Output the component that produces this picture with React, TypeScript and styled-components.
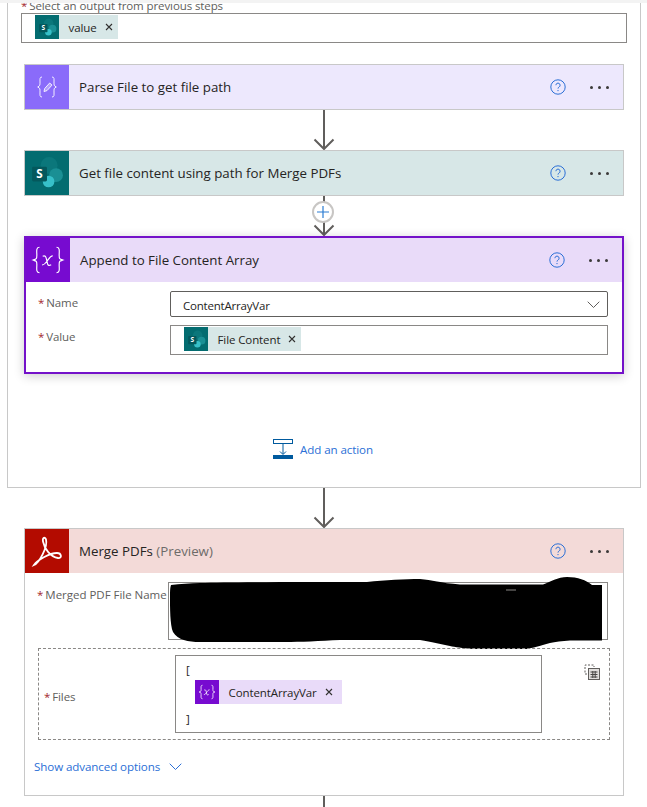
import React from "react";
import styled, { createGlobalStyle } from "styled-components";

type Tone = "parse" | "share" | "variable" | "pdf";

const tones: Record<Tone, { head: string; icon: string }> = {
  parse: { head: "#ede8fd", icon: "#8a6bfa" },
  share: { head: "#d7e7e7", icon: "#036c70" },
  variable: { head: "#e9dbf9", icon: "#770bd0" },
  pdf: { head: "#f3dad8", icon: "#b30b00" },
};

const Global = createGlobalStyle`
  html, body { margin: 0; padding: 0; background: #fff; overflow: hidden; }
  * { box-sizing: border-box; }
  body { font-family: "Open Sans", "Noto Sans", sans-serif; color: #252423; }
`;

const Page = styled.div`
  width: 647px;
  height: 807px;
  overflow: hidden;
`;

const TopBand = styled.div`
  height: 3px;
  background: #f3f3f3;
`;

const Scope = styled.section`
  margin: 0 6px 0 7px;
  padding: 0 13px;
  border: 1px solid #c8c8c8;
  border-top: 0;
  height: 485px;
`;

const ClippedLabel = styled.div`
  height: 10px;
  overflow: hidden;
  display: flex;
  align-items: flex-end;
  font-size: 11.5px;
  line-height: 14px;
  letter-spacing: -0.1px;
  color: #605e5c;
  white-space: nowrap;
`;

const Required = styled.span`
  color: #a4262c;
  margin-right: 2px;
`;

const OutputBox = styled.div`
  height: 30px;
  border: 1px solid #8a8886;
  padding: 1px 13px;
  margin-bottom: 21px;
  display: flex;
  align-items: flex-start;
`;

const Steps = styled.div`
  margin: 0 3px;
`;

const Card = styled.div<{ $selected?: boolean }>`
  position: relative;
  background: #fff;
  border: ${(p) => (p.$selected ? "2px solid #7412c9" : "1px solid #c8c8c8")};
  box-shadow: ${(p) => (p.$selected ? "0 2px 10px rgba(0,0,0,0.2)" : "none")};
`;

const Head = styled.header<{ $tone: Tone }>`
  height: 44px;
  display: flex;
  align-items: center;
  background: ${(p) => tones[p.$tone].head};
`;

const HeadIcon = styled.div<{ $tone: Tone }>`
  width: 44px;
  height: 44px;
  flex: none;
  display: flex;
  align-items: center;
  justify-content: center;
  background: ${(p) => tones[p.$tone].icon};
`;

const HeadTitle = styled.h3`
  margin: 0 0 0 10px;
  font-size: 13.3px;
  font-weight: 400;
  color: #252423;
  letter-spacing: 0;
`;

const Muted = styled.span`
  color: #6d6b69;
`;

const HeadActions = styled.div`
  margin-left: auto;
  display: flex;
  align-items: center;
  gap: 24px;
  padding-right: 14px;
`;

const Dots = styled.div`
  display: flex;
  gap: 5px;
  & > i {
    width: 3px;
    height: 3px;
    border-radius: 50%;
    background: #3b3a39;
  }
`;

const Connector = styled.div`
  position: relative;
  height: 40px;
  display: flex;
  justify-content: center;
`;

const PlusBadge = styled.div`
  position: absolute;
  left: 288px;
  top: 5px;
  width: 22px;
  height: 22px;
  border-radius: 50%;
  border: 2px solid #c8c6c4;
  background: #fff;
  display: flex;
  align-items: center;
  justify-content: center;
`;

const VarBody = styled.div`
  padding: 9px 14px 17px 12px;
  display: grid;
  grid-template-columns: 132px 1fr;
  row-gap: 8px;
`;

const FieldLabel = styled.label`
  font-size: 11.5px;
  letter-spacing: -0.1px;
  color: #605e5c;
  padding-top: 4px;
  white-space: nowrap;
`;

const Select = styled.div`
  height: 26px;
  border: 1px solid #605e5c;
  border-radius: 2px;
  padding: 2px 7px 0 12px;
  display: flex;
  align-items: center;
  justify-content: space-between;
  font-size: 11.5px;
  letter-spacing: -0.2px;
`;

const TokenBox = styled.div`
  height: 30px;
  border: 1px solid #8a8886;
  padding: 1px 13px;
  display: flex;
  align-items: flex-start;
`;

const Token = styled.div<{ $tone: Tone }>`
  height: 24px;
  display: flex;
  align-items: center;
  background: ${(p) => tones[p.$tone].head};
  padding-right: 5px;
  font-size: 11.5px;
  letter-spacing: -0.1px;
  color: #252423;
`;

const TokenIcon = styled.div<{ $tone: Tone }>`
  width: 24px;
  height: 24px;
  display: flex;
  align-items: center;
  justify-content: center;
  background: ${(p) => tones[p.$tone].icon};
  margin-right: 9.5px;
`;

const TokenClose = styled.span`
  display: flex;
  margin-left: 8px;
`;

const AddAction = styled.div`
  height: 113px;
  padding-top: 65px;
  padding-left: 249px;
  display: flex;
  align-items: flex-start;
  gap: 7px;
  font-size: 11.6px;
  letter-spacing: -0.1px;
  color: #2b6fd6;
  line-height: 21px;
`;

const Lower = styled.div`
  margin: 0 23px 0 24px;
`;

const PdfCard = styled(Card)`
  height: 268px;
`;

const PdfBody = styled.div`
  padding: 9px 13px 0;
`;

const NameRow = styled.div`
  position: relative;
  display: flex;
  margin-bottom: 8px;
`;

const NameLabel = styled(FieldLabel)`
  width: 131px;
  margin-left: -1px;
  padding-top: 5px;
  letter-spacing: -0.02px;
`;

const NameInput = styled.div`
  width: 440px;
  height: 58px;
  border: 1px solid #8a8886;
`;

const Scribble = styled.svg`
  position: absolute;
  left: 132px;
  top: -5px;
`;

const FilesBox = styled.div`
  position: relative;
  height: 92px;
  border: 1px dashed #8a8886;
  padding: 6px 0 0 136px;
  display: flex;
`;

const FilesLabel = styled(FieldLabel)`
  position: absolute;
  left: 5px;
  top: 36px;
`;

const ArrayEditor = styled.div`
  width: 367px;
  height: 78px;
  border: 1px solid #8a8886;
  padding: 6px 10px;
  font-size: 11.5px;
  line-height: 15px;
  color: #252423;
`;

const ArrayToken = styled(Token)`
  width: 147px;
  margin: 3px 0 7px 9px;
`;

const SwitchIcon = styled.svg`
  margin: 9px 0 0 42px;
`;

const Advanced = styled.div`
  margin: 19px 0 0 -4px;
  display: flex;
  align-items: center;
  gap: 9px;
  font-size: 11.6px;
  letter-spacing: -0.1px;
  color: #2b6fd6;
`;

const Tail = styled.div`
  height: 11px;
  display: flex;
  justify-content: center;
`;

const TailLine = styled.div`
  width: 2px;
  background: #605e5c;
`;

const Help = () => (
  <svg width="16" height="16" viewBox="0 0 16 16" fill="none">
    <circle cx="8" cy="8" r="7.2" stroke="#2b6fd6" strokeWidth="1" />
    <path d="M5.9 6.2a2.1 2.1 0 1 1 3.2 1.8c-.7.4-1.1.8-1.1 1.6" stroke="#2b6fd6" strokeWidth="1" />
    <circle cx="8" cy="11.6" r=".7" fill="#2b6fd6" />
  </svg>
);

const Actions = () => (
  <HeadActions>
    <Help />
    <Dots>
      <i />
      <i />
      <i />
    </Dots>
  </HeadActions>
);

const SharePoint = ({ size }: { size: number }) => (
  <svg width={size} height={size} viewBox="0 0 32 32">
    <circle cx="18" cy="9" r="8" fill="#0b777b" />
    <circle cx="24.500" cy="18" r="6.500" fill="#1a8f94" />
    <circle cx="17.500" cy="24" r="5.500" fill="#37c0c9" />
    <rect x="2" y="10" width="14" height="14" rx="1.400" fill="#04585c" />
    <text x="9" y="21" textAnchor="middle" fontSize="11" fontWeight="700" fill="#fff" fontFamily="Open Sans, sans-serif">
      S
    </text>
  </svg>
);

const ParseGlyph = () => (
  <svg width="24" height="24" viewBox="0 0 24 24" fill="none" stroke="#f3efff" strokeWidth="1">
    <path d="M7 2C4.500 2 5 4 5 7s.2 3.800-2.300 5C5.200 13.200 5 14 5 17s-.5 5 2 5" />
    <path d="M17 2c2.500 0 2 2 2 5s-.2 3.800 2.300 5C18.800 13.200 19 14 19 17s.5 5-2 5" />
    <path d="M9 16.500l.7-3 5-5.500 2.300 2.100-5 5.500z" fill="#fff" fillOpacity=".35" />
  </svg>
);

const VarGlyph = ({ size, weight }: { size: number; weight: number }) => (
  <svg width={size} height={size} viewBox="0 0 32 32" fill="none" stroke="#fff" strokeWidth={weight}>
    <path d="M8 4C4.500 4 5.500 8 5.500 11.500S5 15 2 16c3 1 3.500 1 3.500 4.500S4.500 28 8 28" />
    <path d="M24 4c3.500 0 2.500 4 2.500 7.500S27 15 30 16c-3 1-3.500 1-3.500 4.500S27.500 28 24 28" />
    <path d="M11 12.500c2.200-1 3 .2 3.500 2.500l1 4.500c.4 1.800 1.500 2 3.500 1M20.500 12c-2.200.2-3.500 2.500-5 4.500S12.800 20.800 10.500 20.500" />
  </svg>
);

const AcrobatGlyph = () => (
  <svg width="34" height="34" viewBox="0 0 34 34" fill="none" stroke="#fff" strokeWidth="1.800">
    <path d="M4 31C9 29 18 13 16 5.500c-.9-3-3.800-2-3 2C14.500 15 20.500 23 28 24c4.500.5 3.500-5-1-5C19.500 19 7 26.500 4 31z" />
  </svg>
);

const Arrow = ({ height = 40 }: { height?: number }) => (
  <svg width="22" height={height} viewBox={`0 0 22 ${height}`} fill="none" stroke="#605e5c" strokeWidth="2">
    <path d={`M11 0V${height - 1}`} />
    <path d={`M1.500 ${height - 10.500}L11 ${height - 1}l9.500-9.500`} />
  </svg>
);

const Close = () => (
  <TokenClose>
    <svg width="8" height="8" viewBox="0 0 8 8" stroke="#323130" strokeWidth="1.1">
      <path d="M1 1l6 6M7 1L1 7" />
    </svg>
  </TokenClose>
);

const Chevron = ({ color }: { color: string }) => (
  <svg width="13" height="8" viewBox="0 0 13 8" fill="none" stroke={color} strokeWidth="1">
    <path d="M.700.700l5.800 5.800 5.800-5.800" />
  </svg>
);

export default function App() {
  return (
    <Page>
      <Global />
      <TopBand />
      <Scope>
        <ClippedLabel>
          <span>
            <Required>*</Required>Select an output from previous steps
          </span>
        </ClippedLabel>
        <OutputBox>
          <Token $tone="share">
            <TokenIcon $tone="share">
              <SharePoint size={19} />
            </TokenIcon>
            value
            <Close />
          </Token>
        </OutputBox>
        <Steps>
          <Card>
            <Head $tone="parse">
              <HeadIcon $tone="parse">
                <ParseGlyph />
              </HeadIcon>
              <HeadTitle>Parse File to get file path</HeadTitle>
              <Actions />
            </Head>
          </Card>
          <Connector>
            <Arrow />
          </Connector>
          <Card>
            <Head $tone="share">
              <HeadIcon $tone="share">
                <SharePoint size={34} />
              </HeadIcon>
              <HeadTitle>Get file content using path for Merge PDFs</HeadTitle>
              <Actions />
            </Head>
          </Card>
          <Connector>
            <Arrow />
            <PlusBadge>
              <svg width="12" height="12" viewBox="0 0 12 12" stroke="#2b7cd3" strokeWidth="1.2">
                <path d="M6 0v12M0 6h12" />
              </svg>
            </PlusBadge>
          </Connector>
          <Card $selected>
            <Head $tone="variable">
              <HeadIcon $tone="variable">
                <VarGlyph size={34} weight={1.1} />
              </HeadIcon>
              <HeadTitle>Append to File Content Array</HeadTitle>
              <Actions />
            </Head>
            <VarBody>
              <FieldLabel>
                <Required>*</Required>Name
              </FieldLabel>
              <Select>
                ContentArrayVar
                <Chevron color="#605e5c" />
              </Select>
              <FieldLabel>
                <Required>*</Required>Value
              </FieldLabel>
              <TokenBox>
                <Token $tone="share">
                  <TokenIcon $tone="share">
                    <SharePoint size={19} />
                  </TokenIcon>
                  File Content
                  <Close />
                </Token>
              </TokenBox>
            </VarBody>
          </Card>
          <AddAction>
            <svg width="20" height="20" viewBox="0 0 20 20" fill="none">
              <rect x=".5" y=".5" width="19" height="4" stroke="#005a9e" />
              <path d="M10 5v10M7 12.500l3 3 3-3" stroke="#005a9e" />
              <rect x="0" y="16" width="20" height="4" fill="#005a9e" />
            </svg>
            Add an action
          </AddAction>
        </Steps>
      </Scope>
      <Connector>
        <Arrow />
      </Connector>
      <Lower>
        <PdfCard>
          <Head $tone="pdf">
            <HeadIcon $tone="pdf">
              <AcrobatGlyph />
            </HeadIcon>
            <HeadTitle>
              Merge PDFs <Muted>(Preview)</Muted>
            </HeadTitle>
            <Actions />
          </Head>
          <PdfBody>
            <NameRow>
              <NameLabel>
                <Required>*</Required>Merged PDF File Name
              </NameLabel>
              <NameInput />
              <Scribble width="432" height="72" viewBox="0 0 432 72" fill="#000">
                <path d="M1 8C10 7 20 6 30 6C60 5 130 5 197 5C215 3 235 2 250 2C262 3 270 6 290 7.500H373C380 5 388 0 397 0C408 0 416 3 422 8H432V63.500H400C392 64 385 65 380 66C370 69 362 71 357 72H303C292 71 285 70 280 69C270 67 262 65 250 63H170C150 64 130 65 115 65H30C18 65 8 63 3 55C0 48 0 30 0 22C0 15 0 11 1 8Z" />
                <path d="M336 13h10" stroke="#8a8886" />
              </Scribble>
            </NameRow>
            <FilesBox>
              <FilesLabel>
                <Required>*</Required>Files
              </FilesLabel>
              <ArrayEditor>
                [
                <ArrayToken $tone="variable">
                  <TokenIcon $tone="variable">
                    <VarGlyph size={18} weight={1.4} />
                  </TokenIcon>
                  ContentArrayVar
                  <Close />
                </ArrayToken>
                ]
              </ArrayEditor>
              <SwitchIcon width="16" height="16" viewBox="0 0 16 16" fill="none">
                <path d="M3 10H1V1h9v2" stroke="#605e5c" strokeDasharray="2 1.500" />
                <rect x="4.500" y="4.500" width="11" height="11" fill="#e1dfdd" stroke="#605e5c" />
                <path d="M6.500 8h7M6.500 10.500h7M6.500 13h7M8.800 7v7M11.200 7v7" stroke="#484644" />
              </SwitchIcon>
            </FilesBox>
            <Advanced>
              Show advanced options
              <Chevron color="#2b6fd6" />
            </Advanced>
          </PdfBody>
        </PdfCard>
        <Tail>
          <TailLine />
        </Tail>
      </Lower>
    </Page>
  );
}
